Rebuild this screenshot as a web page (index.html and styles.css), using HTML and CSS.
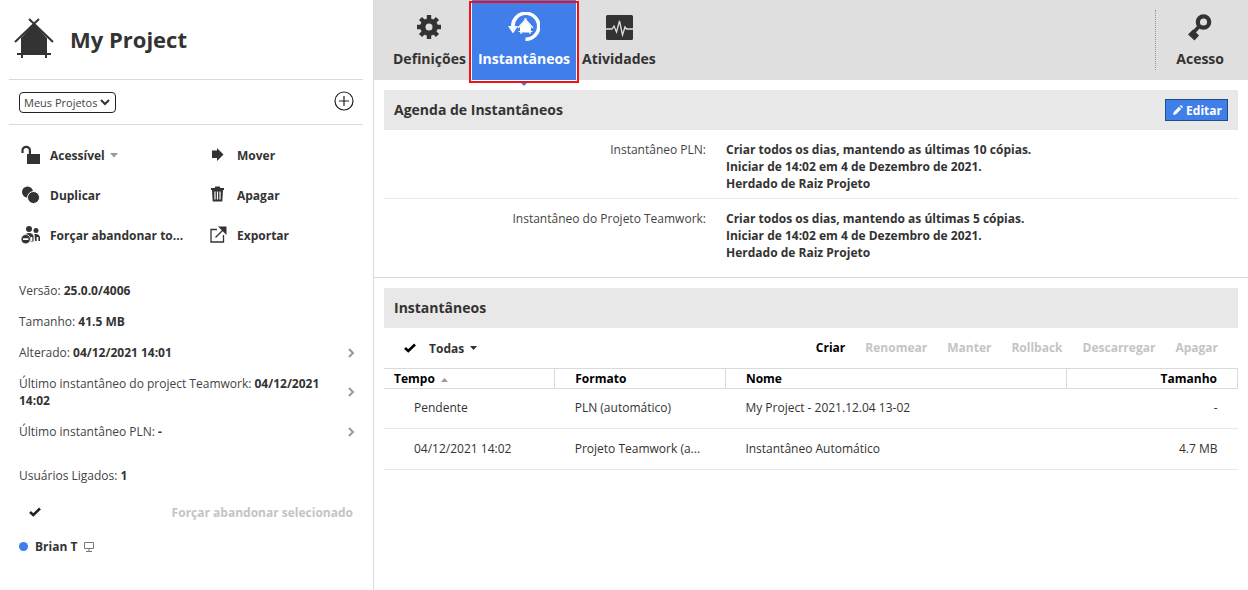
FILE: index.html
```html
<!DOCTYPE html>
<html lang="pt">
<head>
<meta charset="utf-8">
<meta name="viewport" content="width=device-width, initial-scale=1">
<title>My Project</title>
<link rel="stylesheet" href="styles.css">
</head>
<body>
<div class="app">
  <aside class="sidebar">
    <header class="project">
      <svg class="project-icon" width="40" height="42" viewBox="0 0 40 42" aria-hidden="true">
        <path fill="#333" d="M7 20 20 6l13 14v15H7z"/>
        <path fill="none" stroke="#333" stroke-width="2" d="M1 24 25 1M15 1l24 23"/>
        <path fill="none" stroke="#333" stroke-width="2" d="M3 36h34M8 34v6M32 34v6"/>
      </svg>
      <h1 class="project-name">My Project</h1>
    </header>
    <div class="picker">
      <span class="select-wrap">
        <select class="select" aria-label="Projetos"><option>Meus Projetos</option></select>
        <svg class="select-arrow" width="10" height="8" viewBox="0 0 10 8" aria-hidden="true"><path fill="none" stroke="#333" stroke-width="2" d="m1 2 4 4 4-4"/></svg>
      </span>
      <button class="icon-button" type="button" aria-label="Adicionar">
        <svg width="20" height="20" viewBox="0 0 20 20"><circle cx="10" cy="10" r="9" fill="none" stroke="#222" stroke-width="1.2"/><path stroke="#222" stroke-width="1.2" d="M5 10h10M10 5v10"/></svg>
      </button>
    </div>
    <div class="actions">
      <button class="action" type="button">
        <svg width="20" height="20" viewBox="0 0 20 20"><path fill="#333" d="M6 9h13v10H6z"/><path fill="none" stroke="#333" stroke-width="2.200" d="M1.500 8V5.500a3.700 3.700 0 0 1 7.400 0V10"/></svg>
        <span>Acessível</span>
        <svg class="caret" width="8" height="5" viewBox="0 0 8 5"><path fill="#999" d="M0 0h8L4 4.500z"/></svg>
      </button>
      <button class="action" type="button">
        <svg width="20" height="20" viewBox="0 0 20 20"><path fill="#333" d="M3 5.500h5V3l6.500 6.500L8 16v-3H3z"/></svg>
        <span>Mover</span>
      </button>
      <button class="action" type="button">
        <svg width="20" height="20" viewBox="0 0 20 20"><circle cx="6.500" cy="7" r="5.500" fill="#333"/><circle cx="12.500" cy="12.500" r="6" fill="#333" stroke="#fff"/></svg>
        <span>Duplicar</span>
      </button>
      <button class="action" type="button">
        <svg width="20" height="20" viewBox="0 0 20 20"><path fill="#333" d="M2 3h4V1.500h5V3h4v2H2zM3 5h11l-.7 11.500H3.700z"/><path stroke="#fff" stroke-width="1.200" d="M6 6.500v8M8.500 6.500v8M11 6.500v8"/></svg>
        <span>Apagar</span>
      </button>
      <button class="action" type="button">
        <svg width="20" height="20" viewBox="0 0 20 20"><g fill="#333"><circle cx="8" cy="4" r="3"/><circle cx="15" cy="5.500" r="2.500"/><path d="M3 11.500Q4 8 8 8t4.500 3.500V16.500H9.500q0-5.500-6.500-5zM13.500 9q5-.5 5.500 3.500V16h-5z"/></g><circle cx="4.700" cy="14.200" r="4.700" fill="#333" stroke="#fff" stroke-width=".8"/><path stroke="#fff" stroke-width="1.700" d="M2 14.200h5.400M10.500 12v4M16.500 12v4"/></svg>
        <span>Forçar abandonar to...</span>
      </button>
      <button class="action" type="button">
        <svg width="20" height="20" viewBox="0 0 20 20"><path fill="none" stroke="#333" stroke-width="1.300" d="M8 4.500H2v12.500h12.500V10M6.500 12.500l8-8"/><path fill="#333" d="M9 1.500h8.500V10z"/></svg>
        <span>Exportar</span>
      </button>
    </div>
    <ul class="facts">
      <li class="fact"><span>Versão: <b>25.0.0/4006</b></span></li>
      <li class="fact"><span>Tamanho: <b>41.5 MB</b></span></li>
      <li class="fact"><span>Alterado: <b>04/12/2021 14:01</b></span><svg width="8" height="10" viewBox="0 0 8 10"><path class="chevron" d="m2 1 4 4-4 4"/></svg></li>
      <li class="fact"><span>Último instantâneo do project Teamwork: <b>04/12/2021 14:02</b></span><svg width="8" height="10" viewBox="0 0 8 10"><path class="chevron" d="m2 1 4 4-4 4"/></svg></li>
      <li class="fact"><span>Último instantâneo PLN: <b>-</b></span><svg width="8" height="10" viewBox="0 0 8 10"><path class="chevron" d="m2 1 4 4-4 4"/></svg></li>
    </ul>
    <section class="users">
      <p class="users-count">Usuários Ligados: <b>1</b></p>
      <div class="users-tools">
        <button class="check" type="button" aria-label="Selecionar"><svg width="12" height="10" viewBox="0 0 12 10"><path fill="none" stroke="#222" stroke-width="2.600" d="m1 5 3.300 3L11 1.500"/></svg></button>
        <button class="text-button" type="button" disabled>Forçar abandonar selecionado</button>
      </div>
      <div class="user"><span class="dot"></span><b>Brian T</b>
        <svg width="12" height="10" viewBox="0 0 12 10"><path fill="none" stroke="#777" d="M1.500.5h9v6h-9zM6 7v2M3 9.500h6"/></svg>
      </div>
    </section>
  </aside>

  <main class="main">
    <nav class="tabs">
      <a class="tab" href="#definicoes">
        <svg width="26" height="30" viewBox="0 0 26 30"><g fill="#333"><path d="M10.800 3h4.400v24h-4.400z"/><path d="M10.800 3h4.400v24h-4.400z" transform="rotate(45 13 15)"/><path d="M10.800 3h4.400v24h-4.400z" transform="rotate(90 13 15)"/><path d="M10.800 3h4.400v24h-4.400z" transform="rotate(135 13 15)"/><circle cx="13" cy="15" r="8.800"/></g><circle cx="13" cy="15" r="3.500" fill="#dfdfdf"/></svg>
        <span>Definições</span>
      </a>
      <a class="tab tab-active" href="#instantaneos" aria-current="page">
        <svg width="32" height="30" viewBox="0 0 32 30"><path fill="none" stroke="#fff" stroke-width="3.600" d="M4.800 15A13 13 0 1 1 17.500 27.300"/><path fill="#fff" d="M0 14h10L5 21.500z"/><path fill="#fff" d="M12 14.500l5.500-6 5.500 6v6H12z"/><path fill="none" stroke="#fff" stroke-width="1.200" d="m10 16 8.500-9.500M25 16l-8.500-9.500M10.500 19.500h14M13 19v3M22 19v3"/></svg>
        <span>Instantâneos</span>
      </a>
      <a class="tab" href="#atividades">
        <svg width="28" height="30" viewBox="0 0 28 30"><rect x="1" y="3" width="27" height="25" rx="1.500" fill="#333"/><path fill="none" stroke="#dfdfdf" stroke-width="1.300" d="M1 17h6l2-3 2.500 6 3-11 3 14 2.500-8 1.500 2H28"/></svg>
        <span>Atividades</span>
      </a>
      <div class="tab-end">
        <a class="tab" href="#acesso">
          <svg width="26" height="30" viewBox="0 0 26 30"><circle cx="16.500" cy="10" r="5.700" fill="none" stroke="#333" stroke-width="4.200"/><path stroke="#333" stroke-width="3.600" d="M13 13.500 5 22"/><path fill="#333" d="M6 17.500l6 6-4.500 5L1 22.500z"/></svg>
          <span>Acesso</span>
        </a>
      </div>
    </nav>

    <section class="panel">
      <header class="panel-head">
        <h2 class="panel-title">Agenda de Instantâneos</h2>
        <button class="edit" type="button"><svg width="10" height="10" viewBox="0 0 10 10"><path fill="#fff" d="M0 10l.8-3L6 1.800 8.200 4 3 9.200zM6.800 1 8 0l2 2-1 1.200z"/></svg>Editar</button>
      </header>
      <dl class="schedule">
        <div class="schedule-row">
          <dt>Instantâneo PLN:</dt>
          <dd>Criar todos os dias, mantendo as últimas 10 cópias.<br>Iniciar de 14:02 em 4 de Dezembro de 2021.<br>Herdado de Raiz Projeto</dd>
        </div>
        <div class="schedule-row">
          <dt>Instantâneo do Projeto Teamwork:</dt>
          <dd>Criar todos os dias, mantendo as últimas 5 cópias.<br>Iniciar de 14:02 em 4 de Dezembro de 2021.<br>Herdado de Raiz Projeto</dd>
        </div>
      </dl>
    </section>

    <section class="panel">
      <header class="panel-head">
        <h2 class="panel-title">Instantâneos</h2>
      </header>
      <div class="toolbar">
        <button class="check" type="button" aria-label="Selecionar"><svg width="12" height="10" viewBox="0 0 12 10"><path fill="none" stroke="#000" stroke-width="2.600" d="m1 5 3.300 3L11 1.500"/></svg></button>
        <button class="filter" type="button">Todas <svg width="7" height="4" viewBox="0 0 7 4"><path fill="#333" d="M0 0h7L3.500 4z"/></svg></button>
        <div class="toolbar-actions">
          <button class="text-button" type="button">Criar</button>
          <button class="text-button" type="button" disabled>Renomear</button>
          <button class="text-button" type="button" disabled>Manter</button>
          <button class="text-button" type="button" disabled>Rollback</button>
          <button class="text-button" type="button" disabled>Descarregar</button>
          <button class="text-button" type="button" disabled>Apagar</button>
        </div>
      </div>
      <table class="table">
        <thead>
          <tr><th class="col-time">Tempo <svg class="sort" width="7" height="4" viewBox="0 0 7 4"><path fill="#999" d="M0 4h7L3.500 0z"/></svg></th><th class="col-format">Formato</th><th class="col-name">Nome</th><th class="col-size">Tamanho</th></tr>
        </thead>
        <tbody>
          <tr><td>Pendente</td><td>PLN (automático)</td><td>My Project - 2021.12.04 13-02</td><td>-</td></tr>
          <tr><td>04/12/2021 14:02</td><td>Projeto Teamwork (a...</td><td>Instantâneo Automático</td><td>4.7 MB</td></tr>
        </tbody>
      </table>
    </section>
  </main>
</div>
</body>
</html>
```
FILE: styles.css
```css
* { box-sizing: border-box; }

body {
  margin: 0;
  background: #fff;
  color: #333;
  font: 12px/17px "Open Sans", "Noto Sans", sans-serif;
}

h1, h2, p, ul, dl, dd { margin: 0; padding: 0; }
svg { display: block; flex: none; }
b { color: #333; font-weight: 700; }

button {
  margin: 0;
  padding: 0;
  border: 0;
  background: none;
  color: inherit;
  font: inherit;
  cursor: pointer;
}

.app {
  display: grid;
  grid-template-columns: 374px 1fr;
  min-height: 100vh;
}

/* Sidebar */
.sidebar {
  padding: 0 10px 0 9px;
  border-right: 1px solid #dadada;
}

.project {
  display: flex;
  align-items: center;
  gap: 16px;
  height: 80px;
  padding: 0 0 2px 5px;
  border-bottom: 1px solid #dadada;
}

.project-name {
  font-size: 22px;
  line-height: 30px;
  font-weight: 700;
}

.picker {
  display: flex;
  align-items: center;
  justify-content: space-between;
  height: 45px;
  padding: 0 9px 0 10px;
  border-bottom: 1px solid #dadada;
}

.icon-button { padding-bottom: 2px; }

.select-wrap {
  display: grid;
  align-items: center;
}

.select {
  grid-area: 1 / 1;
  width: 97px;
  height: 21px;
  padding: 0 4px;
  border: 1px solid #222;
  border-radius: 4px;
  background: #fff;
  color: #444;
  font: 11px/17px "Open Sans", sans-serif;
  appearance: none;
}

.select-arrow {
  grid-area: 1 / 1;
  justify-self: end;
  margin-right: 6px;
  pointer-events: none;
}

.actions {
  display: grid;
  grid-template-columns: 188px 1fr;
  padding: 10px 10px 0 12px;
}

.action {
  display: flex;
  align-items: center;
  gap: 9px;
  height: 40px;
  font-weight: 700;
  white-space: nowrap;
}

.action:nth-child(even) { gap: 8px; }
.action .caret { margin-left: -4px; }

.facts {
  margin-top: 20px;
  padding: 0 8px 0 10px;
  color: #444;
  list-style: none;
}

.fact {
  display: flex;
  align-items: center;
  justify-content: space-between;
  gap: 24px;
  padding: 7px 0;
}

.chevron {
  fill: none;
  stroke: #999;
  stroke-width: 2;
}

.users {
  padding: 20px 10px 0;
  color: #444;
}

.users-tools {
  display: flex;
  align-items: center;
  justify-content: space-between;
  height: 36px;
  margin-top: 10px;
  padding-left: 10px;
}

.user {
  display: flex;
  align-items: center;
  gap: 6px;
  margin-top: 8px;
}

.dot {
  width: 9px;
  height: 9px;
  margin-right: 1px;
  border-radius: 50%;
  background: #407fea;
}

.text-button {
  color: #000;
  font-weight: 700;
}

.text-button:disabled {
  color: #c4c4c4;
  cursor: default;
}

/* Tabs */
.tabs {
  display: flex;
  height: 80px;
  padding: 0 18px 0 13px;
  background: #dfdfdf;
}

.tab {
  display: flex;
  flex-direction: column;
  align-items: center;
  gap: 7px;
  padding: 12px 6px 0;
  color: #333;
  font-size: 14px;
  line-height: 20px;
  font-weight: 700;
  text-decoration: none;
}

.tab-active {
  position: relative;
  background: #407fea;
  box-shadow: 0 0 0 1px #fff;
  color: #fff;
}

.tab-active::before {
  content: "";
  position: absolute;
  inset: 1px -3px -3px;
  border: 2px solid #f01018;
}

.tab-active::after {
  content: "";
  position: absolute;
  top: 100%;
  left: 50%;
  border: 6px solid transparent;
  border-top-color: #407fea;
  border-bottom: 0;
  transform: translateX(-50%);
  z-index: -1;
}

.tab-end {
  margin: 10px 0 10px auto;
  padding-left: 14px;
  border-left: 1px dotted #999;
}

.tab-end .tab { padding-top: 2px; }

/* Panels */
.panel {
  padding: 10px 10px 0;
}

.panel + .panel { border-top: 1px solid #dadada; }

.panel-head {
  display: flex;
  align-items: center;
  justify-content: space-between;
  height: 40px;
  padding: 0 10px;
  background: #e8e8e8;
}

.panel-title {
  font-size: 14px;
  line-height: 20px;
  font-weight: 700;
}

.edit {
  display: flex;
  align-items: center;
  gap: 3px;
  height: 22px;
  padding: 0 5px 0 7px;
  border: 1px solid #1f4f80;
  background: #407fea;
  color: #fff;
  font-weight: 700;
}

.schedule-row {
  display: grid;
  grid-template-columns: 322px 1fr;
  gap: 20px;
  padding: 11px 0 6px;
}

.schedule-row:last-child { padding-bottom: 16px; }
.schedule-row + .schedule-row { border-top: 1px solid #e8e8e8; }
.schedule-row dt { color: #444; text-align: right; }
.schedule-row dd { font-weight: 700; }

.toolbar {
  display: flex;
  align-items: center;
  height: 40px;
  padding: 0 20px;
}

.filter {
  display: flex;
  align-items: center;
  gap: 6px;
  margin-left: 13px;
  font-weight: 700;
}

.toolbar-actions {
  display: flex;
  gap: 20px;
  margin-left: auto;
  padding-bottom: 2px;
}

.table {
  width: 100%;
  table-layout: fixed;
  border-collapse: collapse;
}

.table th {
  height: 20px;
  padding: 0 20px;
  border: 1px solid #dadada;
  color: #000;
  font-weight: 700;
  text-align: left;
}

.table th:first-child {
  padding-left: 10px;
  border-left: 0;
}

.table td {
  height: 41px;
  padding: 0 20px 2px;
  border-bottom: 1px solid #e8e8e8;
}

.table tbody tr:first-child td { height: 40px; }
.table td:first-child { padding-left: 30px; }
.table th:last-child, .table td:last-child { text-align: right; }

.col-time, .col-format, .col-size { width: 20%; }
.col-name { width: 40%; }

.sort {
  display: inline-block;
  margin-left: 3px;
  vertical-align: middle;
}
```
